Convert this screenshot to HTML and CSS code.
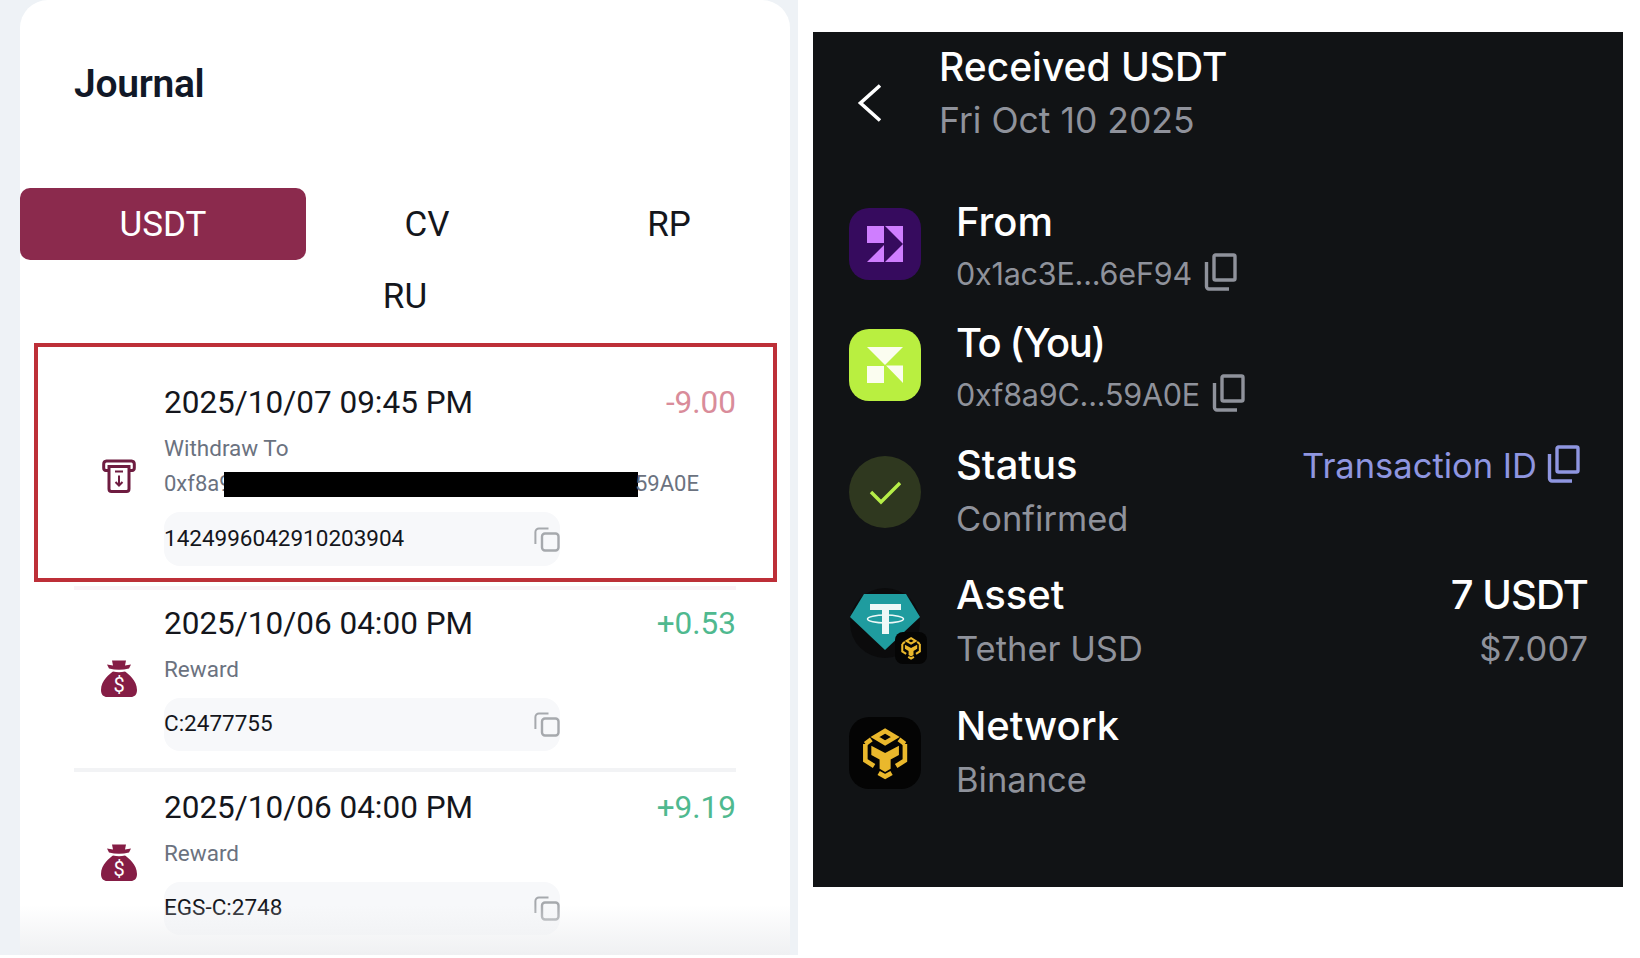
FILE: index.html
```html
<!DOCTYPE html>
<html lang="en">
<head>
<meta charset="utf-8">
<title>Journal and Received USDT</title>
<link rel="stylesheet" href="styles.css">
</head>
<body>
<svg class="defs" width="0" height="0" aria-hidden="true">
  <symbol id="copy-light" viewBox="0 0 26 25">
    <rect x="8" y="6.5" width="16.5" height="17" rx="3" fill="none" stroke="currentColor" stroke-width="2.4"/>
    <path d="M14.5 1.500H5A3.600 3.600 0 0 0 1.400 5v12" fill="none" stroke="currentColor" stroke-width="2"/>
  </symbol>
  <symbol id="copy-dark" viewBox="0 0 33 38">
    <rect x="10" y="2" width="21" height="25" rx="1.500" fill="none" stroke="currentColor" stroke-width="3.400"/>
    <path d="M2.500 9V33.500a2.500 2.500 0 0 0 2.500 2.500H25" fill="none" stroke="currentColor" stroke-width="3.400"/>
  </symbol>
  <symbol id="bnb" viewBox="0 0 72 72">
    <g transform="translate(3 3) scale(.92)">
      <g fill="none" stroke="#eab82c" stroke-width="5">
        <path d="M36 12 47 18.500 36 25 25 18.500Z"/>
        <path d="M14.500 26V44L24 50"/>
        <path d="M57.500 26V44L48 50"/>
        <path d="M21 21 14.500 26M51 21 57.500 26"/>
        <path d="M29 57.500 36 61.500 43 57.500"/>
      </g>
      <path d="M21 28 36 36 51 28V38L42 43V53L36 56.500 30 53V43L21 38Z" fill="#eab82c"/>
    </g>
  </symbol>
</svg>

<main class="journal-column">
  <section class="journal-card">
    <h1 class="journal-title">Journal</h1>
    <div class="tabs">
      <div class="tab tab-active">USDT</div>
      <div class="tab tab-narrow">CV</div>
      <div class="tab tab-narrow">RP</div>
      <div class="tab tab-narrow">RU</div>
    </div>

    <article class="entry entry-flagged">
      <div class="entry-icon">
        <svg class="icon-withdraw" viewBox="0 0 34 34" aria-hidden="true">
          <path d="M7 11.500H4A2.500 2.500 0 0 1 1.700 9V5A3 3 0 0 1 4.500 2h25A3 3 0 0 1 32.300 5v4a2.500 2.500 0 0 1-2.300 2.500h-3" fill="none" stroke="currentColor" stroke-width="3"/>
          <path d="M7 7.500h20v22.500a2.500 2.500 0 0 1-2.500 2.500h-15A2.500 2.500 0 0 1 7 30z" fill="none" stroke="currentColor" stroke-width="3"/>
          <path d="M13 12.500h8M17 16.500v9.500M13.500 23l3.500 3.500 3.500-3.500" fill="none" stroke="currentColor" stroke-width="2"/>
        </svg>
      </div>
      <div class="entry-body">
        <div class="entry-head"><span class="entry-date">2025/10/07 09:45 PM</span><span class="amount amount-out">-9.00</span></div>
        <div class="entry-label">Withdraw To</div>
        <div class="entry-address"><span class="addr-start">0xf8a9C</span><span class="redaction"></span><span class="addr-end">59A0E</span></div>
        <div class="ref ref-address"><span class="ref-text">1424996042910203904</span><svg class="icon-copy-light"><use href="#copy-light"/></svg></div>
      </div>
    </article>
    <div class="divider divider-pink"></div>

    <article class="entry">
      <div class="entry-icon">
        <svg class="icon-bag" viewBox="0 0 36 37" aria-hidden="true">
          <path class="bag-fill" d="M11 .5H25L24 5.500 30 4.500 28 8.500Q18 11 8 8.500L6 4.500 12 5.500Z"/>
          <path class="bag-fill" d="M12 11.500Q18 13 24 11.500C27 14 36 20 36 30 36 35 33 37 30 37H6C3 37 0 35 0 30 0 20 9 14 12 11.500Z"/>
          <text x="18" y="31.500" text-anchor="middle" class="bag-sign">$</text>
        </svg>
      </div>
      <div class="entry-body">
        <div class="entry-head"><span class="entry-date">2025/10/06 04:00 PM</span><span class="amount amount-in">+0.53</span></div>
        <div class="entry-label">Reward</div>
        <div class="ref"><span class="ref-text">C:2477755</span><svg class="icon-copy-light"><use href="#copy-light"/></svg></div>
      </div>
    </article>
    <div class="divider"></div>

    <article class="entry">
      <div class="entry-icon">
        <svg class="icon-bag" viewBox="0 0 36 37" aria-hidden="true">
          <path class="bag-fill" d="M11 .5H25L24 5.500 30 4.500 28 8.500Q18 11 8 8.500L6 4.500 12 5.500Z"/>
          <path class="bag-fill" d="M12 11.500Q18 13 24 11.500C27 14 36 20 36 30 36 35 33 37 30 37H6C3 37 0 35 0 30 0 20 9 14 12 11.500Z"/>
          <text x="18" y="31.500" text-anchor="middle" class="bag-sign">$</text>
        </svg>
      </div>
      <div class="entry-body">
        <div class="entry-head"><span class="entry-date">2025/10/06 04:00 PM</span><span class="amount amount-in">+9.19</span></div>
        <div class="entry-label">Reward</div>
        <div class="ref"><span class="ref-text">EGS-C:2748</span><svg class="icon-copy-light"><use href="#copy-light"/></svg></div>
      </div>
    </article>
    <div class="divider"></div>
    <div class="card-fade"></div>
  </section>
</main>

<section class="receipt">
  <header class="receipt-head">
    <svg class="icon-back" viewBox="0 0 26 40" aria-hidden="true"><path d="M23 2.500 3.500 20 23 37.500" fill="none" stroke="#fff" stroke-width="3.600"/></svg>
    <div class="receipt-heading">
      <h2 class="receipt-title">Received USDT</h2>
      <p class="receipt-date">Fri Oct 10 2025</p>
    </div>
  </header>

  <div class="detail detail-from">
    <svg class="tile tile-low" viewBox="0 0 72 72" aria-hidden="true">
      <rect width="72" height="72" rx="20" fill="#360b5e"/>
      <path d="M18 18H35V35H18ZM18 54 35 37V54ZM36 18H54V54H36Z" fill="#cf7eff"/>
      <path d="M36 18 54 36 36 54Z" fill="#360b5e"/>
    </svg>
    <div class="detail-text">
      <div class="detail-label">From</div>
      <div class="detail-sub detail-sub-address"><span class="address">0x1ac3E...6eF94</span><svg class="icon-copy-dark"><use href="#copy-dark"/></svg></div>
    </div>
  </div>

  <div class="detail detail-to">
    <svg class="tile tile-low" viewBox="0 0 72 72" aria-hidden="true">
      <rect width="72" height="72" rx="20" fill="#b9ef40"/>
      <path d="M18 18H54L36 36ZM18 37H35V54H18ZM37 36.500H54V54Z" fill="#fbfdf0"/>
    </svg>
    <div class="detail-text">
      <div class="detail-label label-to">To (You)</div>
      <div class="detail-sub detail-sub-address"><span class="address">0xf8a9C...59A0E</span><svg class="icon-copy-dark"><use href="#copy-dark"/></svg></div>
    </div>
  </div>

  <div class="detail detail-status">
    <svg class="tile tile-high" viewBox="0 0 72 72" aria-hidden="true">
      <circle cx="36" cy="36" r="36" fill="#2f381f"/>
      <path d="M22 36 32 46 51 27" fill="none" stroke="#b6ee48" stroke-width="3.400"/>
    </svg>
    <div class="detail-text">
      <div class="detail-label">Status</div>
      <div class="detail-sub">Confirmed</div>
    </div>
    <div class="detail-side tx-link"><span>Transaction ID</span><svg class="icon-copy-tx"><use href="#copy-dark"/></svg></div>
  </div>

  <div class="detail detail-asset">
    <div class="tile tile-asset">
      <svg class="tether" viewBox="0 0 72 72" aria-hidden="true">
        <circle cx="36" cy="36" r="35" fill="#0b0b0c"/>
        <path d="M15 7H57L71 30 36 63 1 30Z" fill="#1f9c9f"/>
        <path d="M21 17H52V23H40V47H33V23H21Z" fill="#eef8f7"/>
        <ellipse cx="36.500" cy="32" rx="18" ry="4" fill="none" stroke="#eef8f7" stroke-width="1.500"/>
      </svg>
      <svg class="badge-bnb" viewBox="0 0 72 72" aria-hidden="true">
        <rect width="72" height="72" rx="18" fill="#050505"/>
        <use href="#bnb"/>
      </svg>
    </div>
    <div class="detail-text">
      <div class="detail-label">Asset</div>
      <div class="detail-sub">Tether USD</div>
    </div>
    <div class="detail-side asset-value">
      <div class="detail-label label-tight">7 USDT</div>
      <div class="detail-sub value-usd">$7.007</div>
    </div>
  </div>

  <div class="detail detail-network">
    <svg class="tile tile-high" viewBox="0 0 72 72" aria-hidden="true">
      <rect width="72" height="72" rx="20" fill="#040404"/>
      <use href="#bnb"/>
    </svg>
    <div class="detail-text">
      <div class="detail-label">Network</div>
      <div class="detail-sub">Binance</div>
    </div>
  </div>
</section>
</body>
</html>
```

FILE: styles.css
```css
* { box-sizing: border-box; }

html, body { margin: 0; padding: 0; }

body {
  display: flex;
  align-items: flex-start;
  width: 1640px;
  height: 958px;
  overflow: hidden;
  background: #fff;
}

.defs { position: absolute; }

.bag-fill { fill: currentColor; }

.bag-sign {
  font: 400 20px Roboto, sans-serif;
  fill: #fff;
}

/* Left: journal */
.journal-column {
  flex: 0 0 798px;
  height: 955px;
  padding-left: 20px;
  background: #eef2f6;
  overflow: hidden;
}

.journal-card {
  position: relative;
  width: 770px;
  height: 955px;
  padding-top: 64px;
  background: #fff;
  border-radius: 28px 28px 0 0;
  font-family: Roboto, sans-serif;
  color: #14161c;
}

.journal-title {
  margin: 0 0 84px 54px;
  font-size: 39px;
  line-height: 40px;
  font-weight: 600;
  color: #111827;
  letter-spacing: -0.3px;
}

.tabs {
  display: flex;
  flex-wrap: wrap;
  justify-content: center;
}

.tab {
  height: 72px;
  display: flex;
  align-items: center;
  justify-content: center;
  padding-top: 1px;
  font-size: 35px;
  color: #14161c;
}

.tab-active {
  flex: 0 0 286px;
  background: #8b2a4d;
  color: #fff;
  border-radius: 10px;
}

.tab-narrow { flex: 0 0 242px; }

.entry {
  display: grid;
  grid-template-columns: 90px 1fr;
  margin: 0 54px;
  padding: 15px 0 17px;
}

.entry-flagged {
  margin: 11px 13px 0 14px;
  padding: 38px 37px 12px 36px;
  border: 4px solid #bd2f38;
}

.entry-icon {
  display: flex;
  align-items: center;
  justify-content: center;
  color: #6e1c40;
}

.entry-head {
  display: flex;
  justify-content: space-between;
  font-size: 31.500px;
  line-height: 36px;
}

.amount-out { color: #d98c9a; }
.amount-in { color: #4fb98f; }

.entry-label {
  margin-top: 13px;
  font-size: 22.500px;
  line-height: 28px;
  color: #6b7280;
}

.entry-address {
  display: flex;
  align-items: center;
  height: 28px;
  margin-top: 8px;
  font-size: 22px;
  line-height: 28px;
  color: #6b7280;
}

.addr-start {
  flex: 0 0 60px;
  min-width: 0;
  white-space: nowrap;
}

.redaction {
  flex: 0 0 414px;
  height: 25px;
  background: #000;
}

.addr-end { margin-left: -3px; }

.ref {
  display: flex;
  align-items: center;
  justify-content: space-between;
  width: 396px;
  height: 53px;
  margin-top: 15px;
  background: #f7f8fa;
  border-radius: 16px;
  font-size: 22.500px;
  color: #14161c;
}

.ref-text { margin-top: -3px; }

.ref-address { height: 54px; margin-top: 14px; }

.icon-copy-light {
  width: 26px;
  height: 25px;
  color: #a6a9ad;
}

.icon-withdraw { width: 34px; height: 34px; }
.icon-bag { width: 36px; height: 37px; color: #851d45; }

.divider {
  height: 4px;
  margin: 0 54px 3px;
  background: #f2f3f5;
}

.divider-pink {
  margin-top: 4px;
  margin-bottom: 1px;
  background: #faf3f8;
}

.card-fade {
  position: absolute;
  left: 0;
  right: 0;
  bottom: 0;
  height: 50px;
  background: linear-gradient(to bottom, rgba(240, 241, 243, 0), #eff0f2);
  pointer-events: none;
}

/* Right: receipt */
.receipt {
  flex: 0 0 810px;
  height: 855px;
  margin: 32px 0 0 15px;
  padding: 8px 35px 0 36px;
  background: #111315;
  font-family: Inter, sans-serif;
  color: #fff;
}

.receipt-head {
  display: flex;
  align-items: center;
  margin-bottom: 49px;
}

.icon-back {
  width: 26px;
  height: 40px;
  margin: 19px 56px 0 8px;
}

.receipt-title {
  margin: 0;
  font-size: 39px;
  line-height: 54px;
  font-weight: 500;
}

.receipt-date {
  margin: 1px 0 0;
  font-size: 35.500px;
  line-height: 52px;
  font-weight: 400;
  color: #8f929b;
}

.detail {
  display: grid;
  grid-template-columns: 72px 1fr auto;
  column-gap: 35px;
  align-items: start;
}

.detail-to { margin-top: 17px; }
.detail-status { margin-top: 18px; }
.detail-asset { margin-top: 24px; }
.detail-network { margin-top: 25px; }

.tile { display: block; width: 72px; height: 72px; }
.tile-low { margin-top: 12px; }
.tile-high { margin-top: 17px; }

.tile-asset { position: relative; margin-top: 18px; }
.tether { display: block; width: 72px; height: 72px; }

.badge-bnb {
  position: absolute;
  left: 46px;
  top: 45px;
  width: 32px;
  height: 32px;
}

.detail-label {
  font-size: 40px;
  line-height: 52px;
  font-weight: 500;
  color: #fff;
}

.label-tight { letter-spacing: -0.9px; }
.label-to { letter-spacing: -1.4px; }

.detail-sub {
  display: flex;
  align-items: center;
  padding-top: 2px;
  font-size: 34.500px;
  line-height: 52px;
  color: #8f929b;
}

.detail-sub-address { padding-top: 0; }

.address {
  font-size: 30.500px;
  letter-spacing: -0.2px;
}

.icon-copy-dark {
  width: 33px;
  height: 38px;
  margin-left: 12px;
  margin-top: -5px;
}

.detail-side { text-align: right; }

.tx-link {
  display: flex;
  align-items: center;
  height: 52px;
  font-size: 34.500px;
  color: #8f96e0;
}

.icon-copy-tx {
  width: 33px;
  height: 38px;
  margin-left: 10px;
  margin-right: 8px;
  margin-top: -2px;
}

.value-usd { justify-content: flex-end; }
```
